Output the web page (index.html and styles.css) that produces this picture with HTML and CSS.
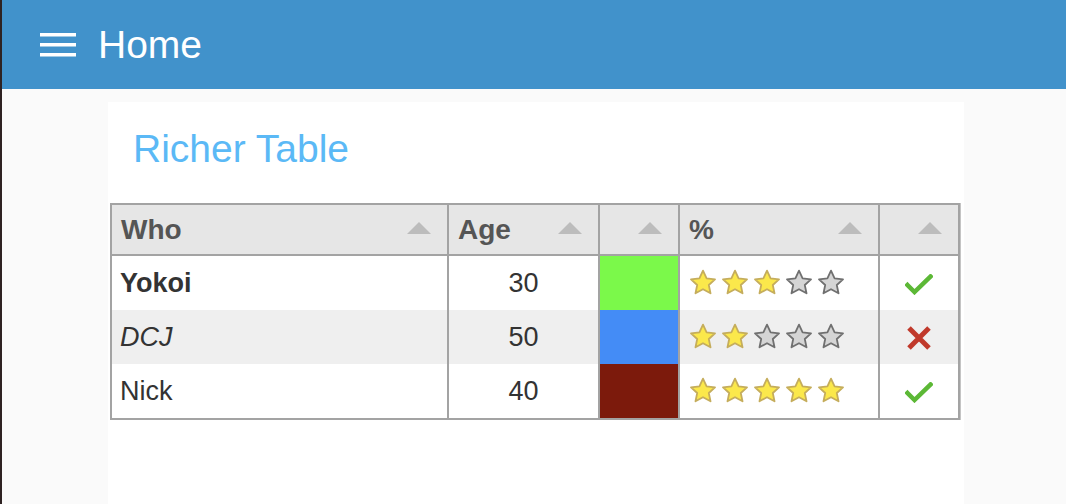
FILE: index.html
```html
<!DOCTYPE html>
<html>
<head>
<meta charset="utf-8">
<title>Home</title>
<link rel="stylesheet" href="styles.css">
</head>
<body>
<header class="topbar">
  <svg class="menu-icon" width="36" height="26" viewBox="0 0 36 26">
    <rect x="0" y="1" width="36" height="3.5" fill="#fff"/>
    <rect x="0" y="11" width="36" height="3.5" fill="#fff"/>
    <rect x="0" y="21" width="36" height="3.5" fill="#fff"/>
  </svg>
  <span class="topbar-title">Home</span>
</header>
<main class="main">
  <section class="card">
    <h1 class="card-title">Richer Table</h1>
    <table class="rich-table">
      <thead>
        <tr>
          <th class="col-who"><div class="th-inner"><span>Who</span><span class="sort"></span></div></th>
          <th class="col-age"><div class="th-inner"><span>Age</span><span class="sort"></span></div></th>
          <th class="col-color"><div class="th-inner"><span></span><span class="sort"></span></div></th>
          <th class="col-pct"><div class="th-inner"><span>%</span><span class="sort"></span></div></th>
          <th class="col-ok"><div class="th-inner"><span></span><span class="sort"></span></div></th>
        </tr>
      </thead>
      <tbody>
        <tr>
          <td class="name bold">Yokoi</td>
          <td class="age">30</td>
          <td class="swatch" style="background:#7bf94a"></td>
          <td class="stars" data-n="3"></td>
          <td class="ok"><svg width="28" height="21" viewBox="0 0 28 21"><polyline points="2.5,11 9.5,18 25.5,2.5" fill="none" stroke="#5cb836" stroke-width="4.5" stroke-linecap="square"/></svg></td>
        </tr>
        <tr class="alt">
          <td class="name italic">DCJ</td>
          <td class="age">50</td>
          <td class="swatch" style="background:#448cf6"></td>
          <td class="stars" data-n="2"></td>
          <td class="ok"><svg width="26" height="24" viewBox="0 0 26 24"><path d="M3,2 L23,22 M23,2 L3,22" fill="none" stroke="#c0392b" stroke-width="5"/></svg></td>
        </tr>
        <tr>
          <td class="name">Nick</td>
          <td class="age">40</td>
          <td class="swatch" style="background:#7c1a0c"></td>
          <td class="stars" data-n="5"></td>
          <td class="ok"><svg width="28" height="21" viewBox="0 0 28 21"><polyline points="2.5,11 9.5,18 25.5,2.5" fill="none" stroke="#5cb836" stroke-width="4.5" stroke-linecap="square"/></svg></td>
        </tr>
      </tbody>
    </table>
  </section>
</main>
<script>
  var star = 'M13,1.6 L16.6,9.3 L25,10.3 L18.8,16 L20.5,24.3 L13,20.2 L5.5,24.3 L7.2,16 L1,10.3 L9.4,9.3 Z';
  document.querySelectorAll('.stars').forEach(function (td) {
    var n = +td.getAttribute('data-n');
    var html = '<div class="star-row">';
    for (var i = 0; i < 5; i++) {
      var on = i < n;
      html += '<svg width="26" height="26" viewBox="0 0 26 26"><path d="' + star + '" fill="' + (on ? '#fbe84b' : '#d5d5d5') + '" stroke="' + (on ? '#c5ad5c' : '#707070') + '" stroke-width="1.8" stroke-linejoin="round"/></svg>';
    }
    td.innerHTML = html + '</div>';
  });
</script>
</body>
</html>
```

FILE: styles.css
```css
html, body {
  margin: 0;
  padding: 0;
}
body {
  background: #fafafa;
  font-family: "Liberation Sans", Arial, sans-serif;
  min-height: 504px;
  border-left: 2px solid #2e2222;
}
.topbar {
  height: 89px;
  background: #4192cb;
  display: flex;
  align-items: center;
  padding-left: 38px;
  gap: 22px;
  box-shadow: -2px 0 0 #7f8b96;
}
.menu-icon {
  display: block;
}
.topbar-title {
  color: #fff;
  font-size: 39px;
  line-height: 89px;
}
.main {
  padding-top: 13px;
  padding-left: 106px;
}
.card {
  width: 856px;
  min-height: 402px;
  background: #fff;
  padding: 25px 2px 0;
  box-sizing: border-box;
}
.card-title {
  margin: 0 0 32px 23px;
  font-size: 39px;
  line-height: 44px;
  font-weight: normal;
  color: #5bb9f6;
}
.rich-table {
  width: 850px;
  table-layout: fixed;
  border-collapse: separate;
  border-spacing: 0;
  border: 2px solid #a3a3a3;
  box-shadow: 1px 0 0 #c4c4c4;
  font-size: 27px;
  color: #333;
}
.rich-table th, .rich-table td {
  box-sizing: border-box;
  padding: 0;
}
.rich-table th + th, .rich-table td + td {
  border-left: 2px solid #a3a3a3;
}
.rich-table th {
  height: 51px;
  background: #e6e6e6;
  border-bottom: 2px solid #a3a3a3;
  font-size: 28px;
  font-weight: bold;
  color: #555;
  text-align: left;
}
.col-who { width: 335px; }
.col-age { width: 151px; }
.col-color { width: 80px; }
.col-pct { width: 200px; }
.col-ok { width: 80px; }
.th-inner {
  display: flex;
  align-items: center;
  justify-content: space-between;
  padding: 0 16px 0 9px;
}
.sort {
  width: 0;
  height: 0;
  border-left: 12px solid transparent;
  border-right: 12px solid transparent;
  border-bottom: 12px solid #bcbcbc;
  margin-top: -3px;
}
.rich-table td {
  height: 54px;
}
.rich-table tr.alt td {
  background: #efefef;
}
.name {
  padding-left: 8px !important;
}
.bold { font-weight: bold; }
.italic { font-style: italic; }
.age, .ok {
  text-align: center;
}
.ok svg {
  display: inline-block;
  vertical-align: middle;
}
.star-row {
  display: flex;
  gap: 6px;
  padding-left: 10px;
  margin-top: -3px;
}
.star-row svg {
  display: block;
}
```
